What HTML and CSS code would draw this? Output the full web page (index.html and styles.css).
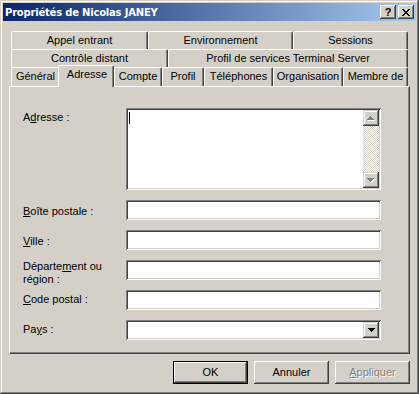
FILE: index.html
```html
<!DOCTYPE html>
<html lang="fr">
<head>
<meta charset="utf-8">
<title>Propriétés de Nicolas JANEY</title>
<link rel="stylesheet" href="styles.css">
</head>
<body>
<div class="window">
  <div class="titlebar">
    <span class="title">Propriétés de Nicolas JANEY</span>
    <div class="caption-btns">
      <span class="cbtn help">?</span>
      <span class="cbtn close"><svg width="8" height="7" viewBox="0 0 8 7" shape-rendering="crispEdges"><path d="M0 0h2v1h1v1h2V1h1V0h2v1H7v1H6v1H5v1h1v1h1v1h1v1H6V6H5V5H3v1H2v1H0V6h1V5h1V4h1V3H2V2H1V1H0z" fill="#000"/></svg></span>
    </div>
  </div>
  <div class="client">
    <div class="tabs">
      <div class="tabrow r1">
        <div class="tab">Appel entrant</div>
        <div class="tab">Environnement</div>
        <div class="tab">Sessions</div>
      </div>
      <div class="tabrow r2">
        <div class="tab">Contrôle distant</div>
        <div class="tab">Profil de services Terminal Server</div>
      </div>
      <div class="tabrow r3">
        <div class="tab">Général</div>
        <div class="tab active">Adresse</div>
        <div class="tab">Compte</div>
        <div class="tab">Profil</div>
        <div class="tab">Téléphones</div>
        <div class="tab">Organisation</div>
        <div class="tab">Membre de</div>
      </div>
    </div>
    <div class="panel">
      <div class="form">
        <div class="row first">
          <label class="lbl lbl-addr">A<u>d</u>resse :</label>
          <div class="field multi">
            <span class="caret"></span>
            <div class="scrollbar">
              <span class="sbtn"><svg width="8" height="5" viewBox="0 0 8 5" shape-rendering="crispEdges"><path d="M4 1h1v1h1v1h1v1h1v1H1V4h1V3h1V2h1z" fill="#fff"/><path d="M3 0h1v1h1v1h1v1h1v1H0V3h1V2h1V1h1z" fill="#808080"/></svg></span>
              <span class="track"></span>
              <span class="sbtn"><svg width="8" height="5" viewBox="0 0 8 5" shape-rendering="crispEdges"><path d="M1 1h7v1H7v1H6v1H5v1H4V4H3V3H2V2H1z" fill="#fff"/><path d="M0 0h7v1H6v1H5v1H4v1H3V3H2V2H1V1H0z" fill="#808080"/></svg></span>
            </div>
          </div>
        </div>
        <div class="row">
          <label class="lbl"><u>B</u>oîte postale :</label>
          <div class="field"></div>
        </div>
        <div class="row">
          <label class="lbl"><u>V</u>ille :</label>
          <div class="field"></div>
        </div>
        <div class="row">
          <label class="lbl lbl-wrap">Départe<u>m</u>ent ou<br>région :</label>
          <div class="field"></div>
        </div>
        <div class="row">
          <label class="lbl lbl-tight"><u>C</u>ode postal :</label>
          <div class="field"></div>
        </div>
        <div class="row">
          <label class="lbl lbl-tight">Pa<u>y</u>s :</label>
          <div class="field combo">
            <span class="sbtn"><svg width="7" height="4" viewBox="0 0 7 4" shape-rendering="crispEdges"><path d="M0 0h7v1H6v1H5v1H4v1H3V3H2V2H1V1H0z" fill="#000"/></svg></span>
          </div>
        </div>
      </div>
    </div>
    <div class="actions">
      <button class="btn default">OK</button>
      <button class="btn">Annuler</button>
      <button class="btn disabled"><u>A</u>ppliquer</button>
    </div>
  </div>
</div>
</body>
</html>
```
FILE: styles.css
```css
body {
  margin: 0;
  background: #d4d0c8;
  font-family: "Liberation Sans", Arial, sans-serif;
  font-size: 11px;
  line-height: 13px;
  color: #000;
}

.window {
  width: 419px;
  height: 394px;
  box-sizing: border-box;
  padding: 3px;
  background: #d4d0c8;
  box-shadow: inset -1px -1px #404040, inset 1px 1px #d4d0c8, inset -2px -2px #808080, inset 2px 2px #fff;
  display: flex;
  flex-direction: column;
}

.titlebar {
  height: 18px;
  display: flex;
  align-items: center;
  padding-left: 2px;
  background: linear-gradient(to right, #0a246a, #a6caf0);
  color: #fff;
}

.title {
  font-family: "DejaVu Sans", "Liberation Sans", sans-serif;
  font-weight: bold;
  font-size: 10px;
  letter-spacing: -0.2px;
}

.caption-btns {
  margin-left: auto;
  margin-right: 2px;
  display: flex;
  gap: 2px;
}

.cbtn {
  width: 16px;
  height: 14px;
  box-sizing: border-box;
  background: #d4d0c8;
  box-shadow: inset -1px -1px #404040, inset 1px 1px #fff, inset -2px -2px #808080, inset 2px 2px #d4d0c8;
  display: flex;
  align-items: center;
  justify-content: center;
  color: #000;
  font-weight: bold;
  font-size: 11px;
}

.client {
  flex: 1;
  padding: 10px 6px 0;
  display: flex;
  flex-direction: column;
}

.tabs {
  margin: 0 2px;
}

.tabrow {
  display: grid;
  grid-auto-rows: 18px;
}

.r1 { grid-template-columns: 137px 145px 115px; }
.r2 { grid-template-columns: 157px 240px; }
.r3 { grid-template-columns: 49px 54px 48px 42px 69px 70px 65px; grid-auto-rows: 19px; }

.tab {
  box-sizing: border-box;
  padding-top: 2px;
  text-align: center;
  white-space: nowrap;
  background: #d4d0c8;
  border-top: 1px solid #fff;
  border-left: 1px solid #fff;
  border-right: 1px solid #404040;
  border-radius: 2px 2px 0 0;
  box-shadow: inset -1px 0 #808080;
}

.tab.active {
  margin: -2px 0 -1px -2px;
  padding-left: 2px;
  z-index: 1;
}

.panel {
  width: 401px;
  height: 268px;
  box-sizing: border-box;
  border: 1px solid;
  border-color: #fff #404040 #404040 #fff;
  box-shadow: inset -1px -1px #808080;
}

.form {
  padding: 21px 0 0 13px;
}

.row {
  display: flex;
  height: 20px;
  margin-top: 10px;
}

.row.first {
  margin-top: 0;
  height: auto;
}

.lbl {
  width: 103px;
  flex: none;
  padding-top: 5px;
}

.lbl-addr { padding-top: 3px; }
.lbl-wrap { padding-top: 0; }
.lbl-tight { padding-top: 3px; }

.field {
  width: 255px;
  height: 20px;
  box-sizing: border-box;
  padding: 2px;
  background: #fff;
  box-shadow: inset 1px 1px #808080, inset -1px -1px #fff, inset 2px 2px #404040, inset -2px -2px #d4d0c8;
  display: flex;
  justify-content: space-between;
}

.field.multi {
  height: 82px;
}

.field.combo {
  justify-content: flex-end;
}

.caret {
  width: 1px;
  height: 12px;
  margin: 2px 0 0 1px;
  background: #000;
}

.scrollbar {
  width: 16px;
  display: flex;
  flex-direction: column;
}

.track {
  flex: 1;
  background: repeating-conic-gradient(#d4d0c8 0 25%, #fff 0 50%) 0 0 / 2px 2px;
}

.sbtn {
  width: 16px;
  height: 16px;
  box-sizing: border-box;
  background: #d4d0c8;
  box-shadow: inset -1px -1px #404040, inset 1px 1px #d4d0c8, inset -2px -2px #808080, inset 2px 2px #fff;
  display: flex;
  align-items: center;
  justify-content: center;
}

.actions {
  display: flex;
  justify-content: flex-end;
  gap: 6px;
  margin-top: 7px;
}

.btn {
  width: 75px;
  height: 23px;
  box-sizing: border-box;
  border: 0;
  padding: 0;
  margin: 0;
  font: inherit;
  color: #000;
  background: #d4d0c8;
  box-shadow: inset -1px -1px #404040, inset 1px 1px #fff, inset -2px -2px #808080, inset 2px 2px #d4d0c8;
}

.btn.default {
  box-shadow: inset 0 0 0 1px #000, inset -2px -2px #404040, inset 2px 2px #fff, inset -3px -3px #808080;
}

.btn.disabled {
  color: #808080;
  text-shadow: 1px 1px #fff;
}
```
